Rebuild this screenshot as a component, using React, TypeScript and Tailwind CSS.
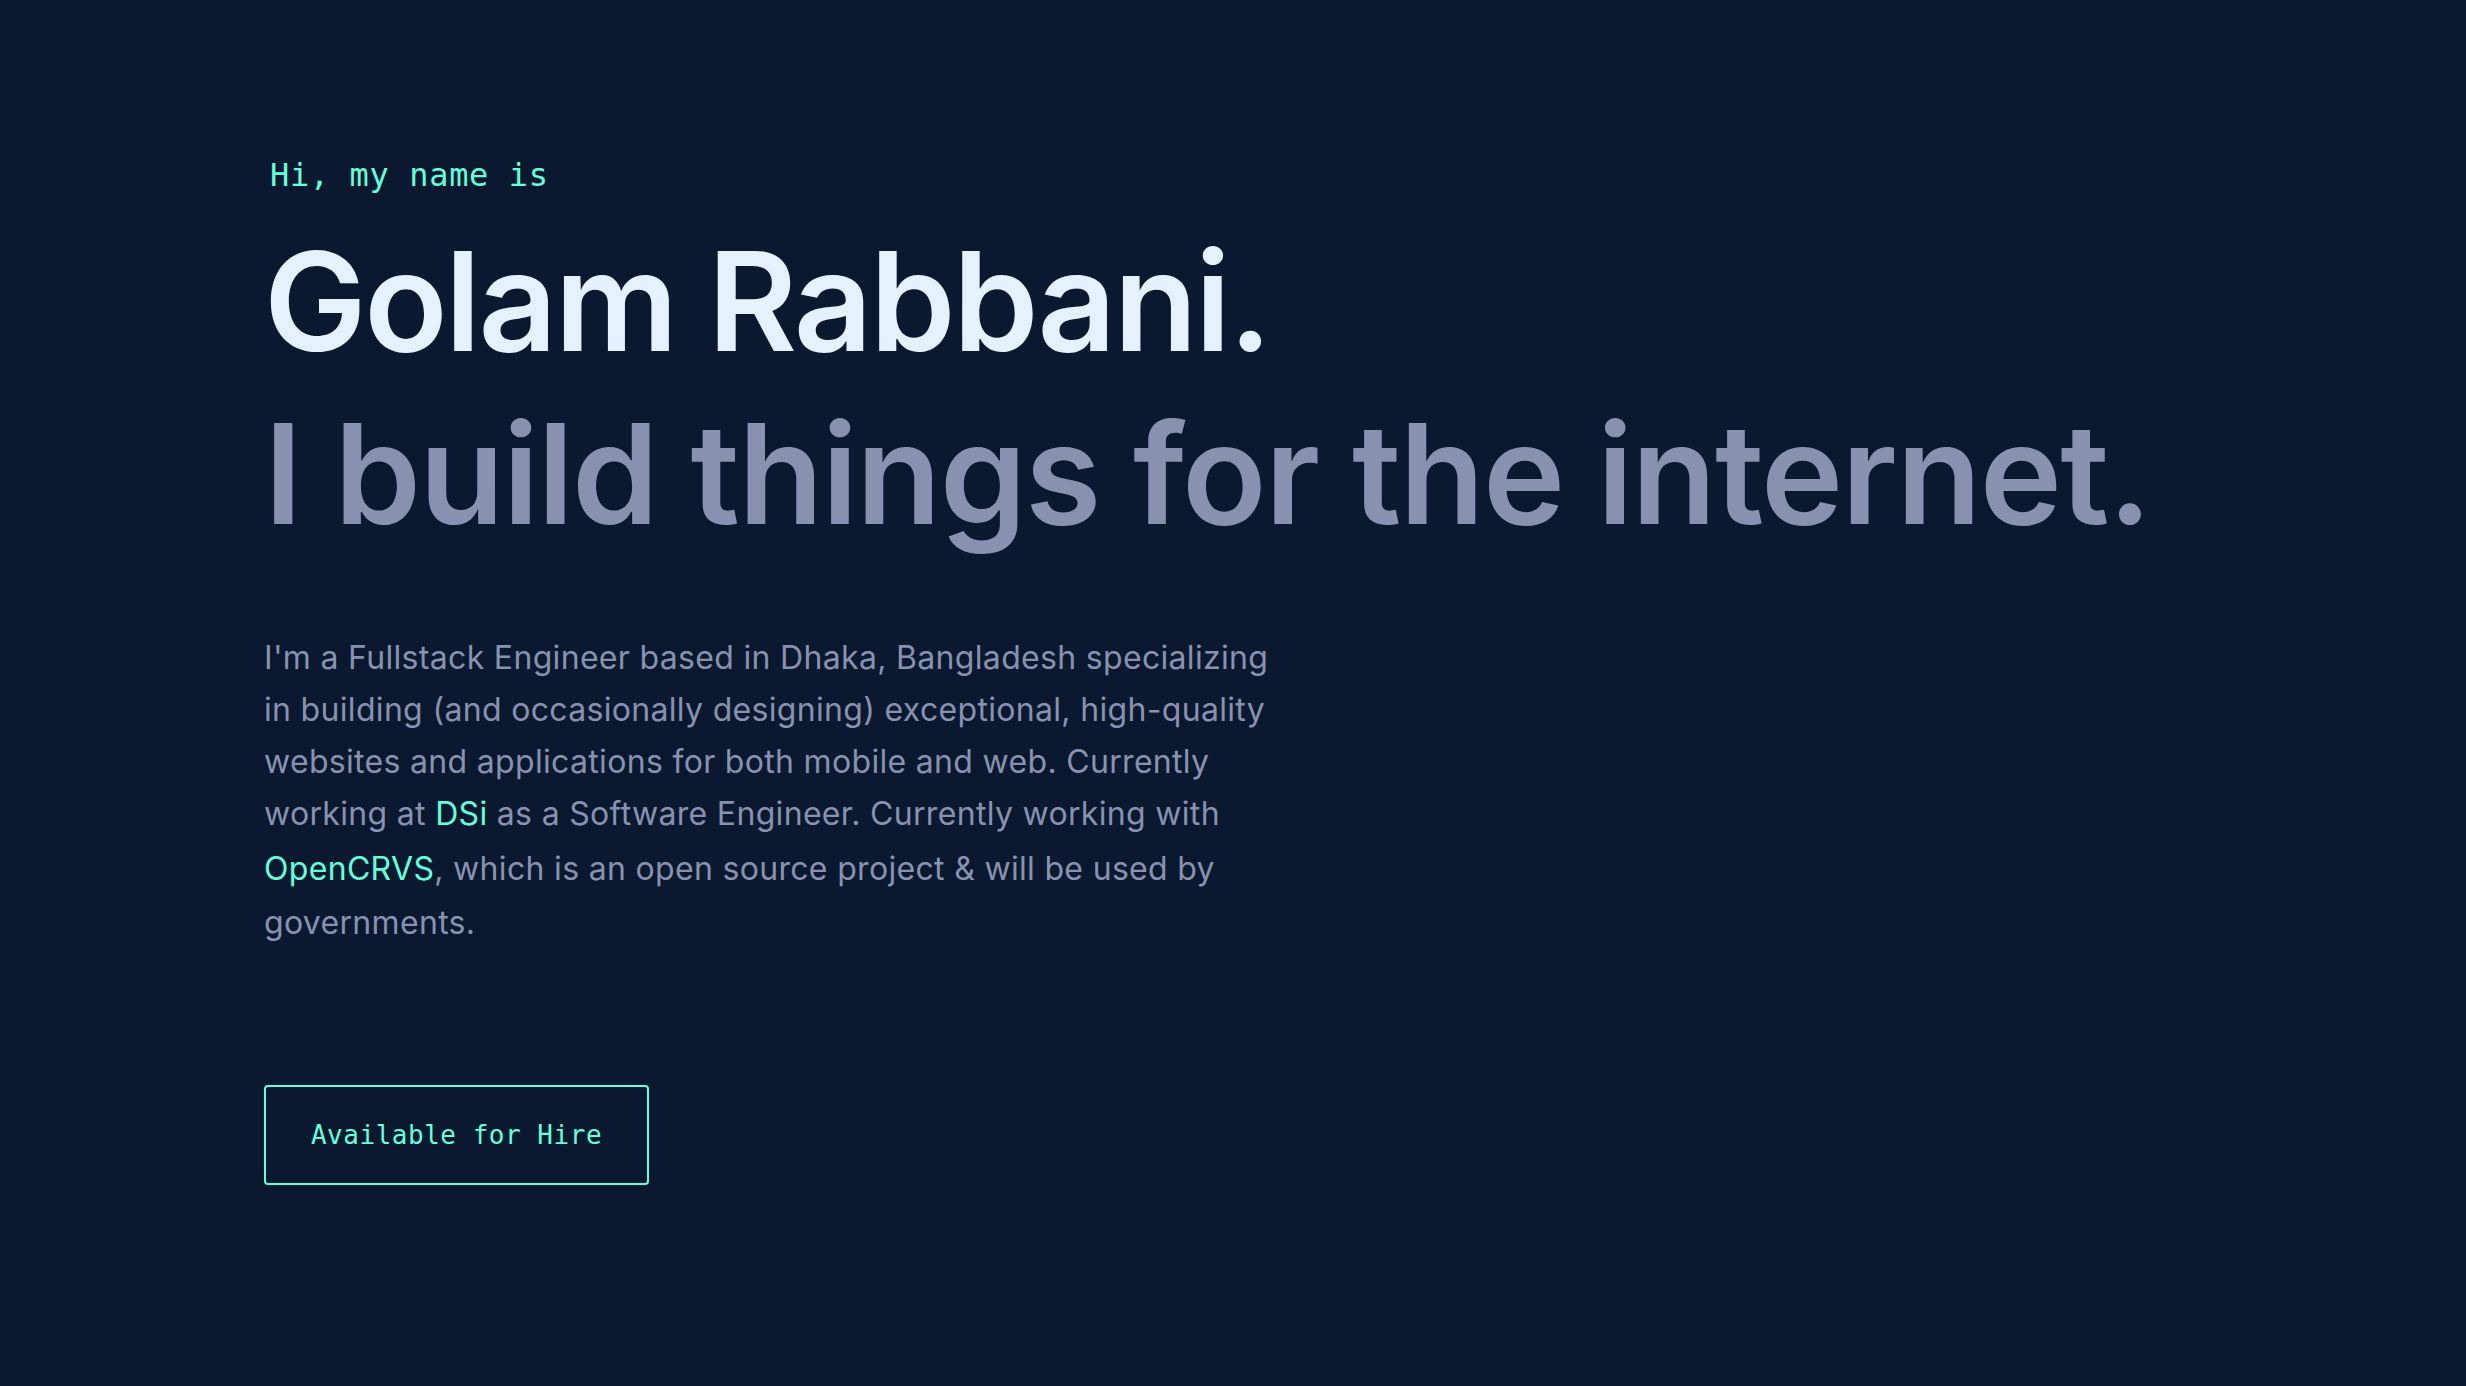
const Hero = () => {
  return (
    <main className="min-h-screen w-full bg-[#0a192f] font-['Inter','Noto_Sans',sans-serif]">
      <section className="flex flex-col items-start pl-[264px] pt-[155px] pb-[200px]">
        <p className="pl-[6px] font-['DejaVu_Sans_Mono','Liberation_Mono',monospace] text-[32px] leading-[40px] tracking-[0.02em] text-[#64ffda]">
          Hi, my name is
        </p>
        <h1 className="mt-[38px] text-[137px] font-semibold leading-[1] tracking-[-0.018em] text-[#e6f1ff]">
          Golam Rabbani.
        </h1>
        <h2 className="mt-[34px] text-[139px] font-semibold leading-[1] tracking-[-0.012em] text-[#8892b0]">
          I build things for the internet.
        </h2>
        <p className="mt-[89px] max-w-[1015px] text-[32px] leading-[52px] tracking-[0.01em] text-[#8892b0]">
          I'm a Fullstack Engineer based in Dhaka, Bangladesh specializing in building (and occasionally
          designing) exceptional, high-quality websites and applications for both mobile and web. Currently
          working at <a className="text-[#64ffda]">DSi</a> as a Software Engineer. Currently working with{" "}
          <a className="inline-block leading-[57px] text-[#64ffda]">OpenCRVS</a>, which is an open source project
          &amp; will be used by governments.
        </p>
        <a className="mt-[136px] flex h-[100px] w-[385px] items-center justify-center rounded-[4px] border-2 border-[#64ffda] font-['DejaVu_Sans_Mono','Liberation_Mono',monospace] text-[26px] tracking-[0.02em] text-[#64ffda]">
          Available for Hire
        </a>
      </section>
    </main>
  );
};

export default function App() {
  return <Hero />;
}
